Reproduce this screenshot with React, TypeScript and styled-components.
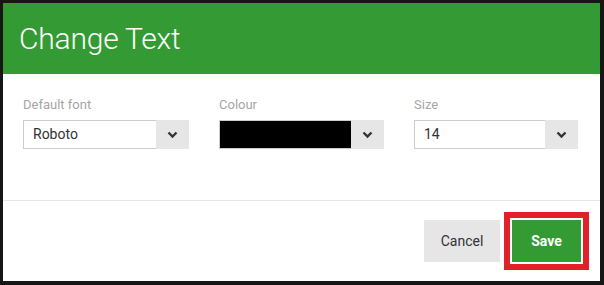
import React from 'react';
import styled, { createGlobalStyle } from 'styled-components';

const GlobalStyle = createGlobalStyle`
  html, body {
    margin: 0;
    padding: 0;
    background: #161616;
  }
  body {
    font-family: Roboto, "Liberation Sans", Arial, sans-serif;
  }
`;

const Backdrop = styled.div`
  width: 604px;
  height: 285px;
  padding: 3px 4px 4px 3px;
  box-sizing: border-box;
`;

const Dialog = styled.div`
  background: #fff;
  height: 278px;
  display: flex;
  flex-direction: column;
`;

const Header = styled.header`
  background: #349b34;
  height: 71px;
  display: flex;
  align-items: center;
  padding: 0 16px;
  box-sizing: border-box;
`;

const Title = styled.h1`
  margin: 0;
  color: #fff;
  font-size: 30px;
  font-weight: 300;
  letter-spacing: -0.2px;
`;

const Body = styled.div`
  padding: 23px 20px 0 20px;
  height: 127px;
  box-sizing: border-box;
  border-bottom: 1px solid #e6e6e6;
`;

const Fields = styled.div`
  display: grid;
  grid-template-columns: 166px 165px 164px;
  column-gap: 30px;
`;

const Field = styled.div`
  display: flex;
  flex-direction: column;
`;

const Label = styled.label`
  color: #a6a6a6;
  font-size: 13px;
  line-height: 16px;
  margin-bottom: 7px;
`;

const Select = styled.div`
  display: flex;
  height: 29px;
`;

const Value = styled.div<{ $swatch?: string }>`
  flex: 1;
  border: 1px solid #cccccc;
  border-right: none;
  background: ${p => p.$swatch || '#fff'};
  color: #333;
  font-size: 14px;
  line-height: 27px;
  padding: 0 9px;
`;

const Arrow = styled.div`
  width: 33px;
  background: #e6e6e6;
  display: flex;
  align-items: center;
  justify-content: center;
`;

const Footer = styled.footer`
  flex: 1;
  display: flex;
  justify-content: flex-end;
  align-items: center;
  gap: 12px;
  padding: 0 19px;
`;

const Button = styled.button<{ $primary?: boolean }>`
  height: 42px;
  border: none;
  font-family: Roboto, "Liberation Sans", Arial, sans-serif;
  font-size: 14px;
  padding: 0;
  width: ${p => (p.$primary ? '69px' : '76px')};
  background: ${p => (p.$primary ? '#349b34' : '#e6e6e6')};
  color: ${p => (p.$primary ? '#fff' : '#333')};
  font-weight: ${p => (p.$primary ? 700 : 400)};
  box-shadow: ${p => (p.$primary ? '0 0 0 2px #fff, 0 0 0 8px #e2202a' : 'none')};
`;

const Chevron = () => (
  <svg width="11" height="8" viewBox="0 0 11 8">
    <path d="M1.5 1.5 L5.5 5.5 L9.5 1.5" fill="none" stroke="#333" strokeWidth="2.4" />
  </svg>
);

const fields = [
  { label: 'Default font', value: 'Roboto' },
  { label: 'Colour', value: '', swatch: '#000' },
  { label: 'Size', value: '14' },
];

export default function App() {
  return (
    <>
      <GlobalStyle />
      <Backdrop>
        <Dialog>
          <Header>
            <Title>Change Text</Title>
          </Header>
          <Body>
            <Fields>
              {fields.map(f => (
                <Field key={f.label}>
                  <Label>{f.label}</Label>
                  <Select>
                    <Value $swatch={f.swatch}>{f.value}</Value>
                    <Arrow>
                      <Chevron />
                    </Arrow>
                  </Select>
                </Field>
              ))}
            </Fields>
          </Body>
          <Footer>
            <Button>Cancel</Button>
            <Button $primary>Save</Button>
          </Footer>
        </Dialog>
      </Backdrop>
    </>
  );
}
